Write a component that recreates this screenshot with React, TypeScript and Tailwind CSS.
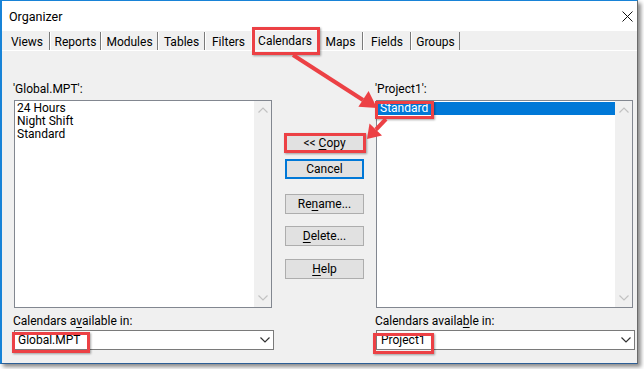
import React from "react";

function U({ children }: { children: React.ReactNode }) {
  return <span className="underline underline-offset-[2px] decoration-[1px]">{children}</span>;
}

function Chevron({ up, color }: { up?: boolean; color: string }) {
  return (
    <svg width="10" height="6" viewBox="0 0 10 6">
      <polyline
        points={up ? "0.5,5.5 5,1 9.5,5.5" : "0.5,0.5 5,5 9.5,0.5"}
        fill="none"
        stroke={color}
        strokeWidth="1.2"
      />
    </svg>
  );
}

function ScrollBar() {
  return (
    <div className="w-[17px] bg-[#f0f0f0] flex flex-col items-center justify-between pt-[6px] pb-[6px]">
      <Chevron up color="#c2c2c2" />
      <Chevron color="#c2c2c2" />
    </div>
  );
}

function Button({ children, def }: { children: React.ReactNode; def?: boolean }) {
  return (
    <div
      className={
        def
          ? "h-[20px] w-[79px] bg-[#e1e1e1] border border-[#0078d7] shadow-[inset_0_0_0_1px_#0078d7] flex items-center justify-center"
          : "h-[20px] w-[79px] bg-[#e1e1e1] border border-[#adadad] flex items-center justify-center"
      }
    >
      <span className="whitespace-pre">{children}</span>
    </div>
  );
}

const RED = "#ec4145";

export default function App() {
  return (
    <div className="relative w-[644px] h-[369px] bg-white overflow-hidden font-['Segoe_UI',Roboto,sans-serif] text-[12px] leading-[15px] text-black">
      <div className="w-[638px] h-[364px] flex flex-col border-t border-l-2 border-r border-b border-t-[#1883d7] border-l-[#1883d7] border-b-[#2d5f96] border-r-[#6a6a6a] shadow-[3px_3px_4px_rgba(0,0,0,0.45)] bg-[#f0f0f0]">
        {/* Title bar */}
        <div className="h-[30px] bg-white flex items-center justify-between pl-[7px] pr-[4px]">
          <span className="text-[12.5px]">Organizer</span>
          <svg width="11" height="11" viewBox="0 0 11 11">
            <path d="M0.5 0.5 L10.5 10.5 M10.5 0.5 L0.5 10.5" stroke="#111" strokeWidth="1" />
          </svg>
        </div>

        {/* Tab strip */}
        <div className="h-[20px] flex items-end pl-[3px] border-b border-white">
          <div className="w-[45px] h-[18px] pt-[2px] border-r border-r-[#7a7a7a] flex items-center justify-center">Views</div>
          <div className="w-[51px] h-[18px] pt-[2px] border-l border-l-white border-r border-r-[#7a7a7a] flex items-center justify-center">Reports</div>
          <div className="w-[57px] h-[18px] pt-[2px] border-l border-l-white border-r border-r-[#7a7a7a] flex items-center justify-center">Modules</div>
          <div className="w-[47px] h-[18px] pt-[2px] border-l border-l-white border-r border-r-[#7a7a7a] flex items-center justify-center">Tables</div>
          <div className="w-[46px] h-[18px] pt-[2px] border-l border-l-white flex items-center justify-center">Filters</div>
          <div className="w-[68px] h-[20px] pt-[1px] border-l border-t border-white border-r border-r-[#7a7a7a] flex items-center justify-center">Calendars</div>
          <div className="w-[44px] h-[18px] pt-[2px] border-r border-r-[#7a7a7a] flex items-center justify-center">Maps</div>
          <div className="w-[48px] h-[18px] pt-[2px] border-l border-l-white border-r border-r-[#7a7a7a] flex items-center justify-center">Fields</div>
          <div className="w-[49px] h-[18px] pt-[2px] border-l border-l-white border-r border-r-[#7a7a7a] flex items-center justify-center">Groups</div>
        </div>

        {/* Panel */}
        <div className="flex-1 flex pt-[31px] pl-[11px]">
          {/* Left column */}
          <div className="w-[262px] flex flex-col">
            <div className="h-[15px] mb-[3px]">'Global.MPT':</div>
            <div className="ml-[1px] w-[258px] h-[208px] border border-[#828790] bg-white flex">
              <div className="flex-1 pt-[1px] leading-[13px]">
                <div className="h-[13px] pl-[2px]">24 Hours</div>
                <div className="h-[13px] pl-[2px]">Night Shift</div>
                <div className="h-[13px] pl-[2px]">Standard</div>
              </div>
              <ScrollBar />
            </div>
            <div className="h-[15px] mt-[6px]">
              Calendars a<U>v</U>ailable in:
            </div>
            <div className="ml-[1px] mt-[1px] w-[260px] h-[20px] border border-[#7a7a7a] bg-white flex items-center justify-between pl-[3px] pr-[3px]">
              <span>Global.MPT</span>
              <Chevron color="#333" />
            </div>
          </div>

          {/* Middle buttons */}
          <div className="ml-[10px] w-[79px] flex flex-col">
            <div className="mt-[51px]">
              <Button>
                {"<< "}
                <U>C</U>opy
              </Button>
            </div>
            <div className="mt-[6px]">
              <Button def>Cancel</Button>
            </div>
            <div className="mt-[15px]">
              <Button>
                Re<U>n</U>ame...
              </Button>
            </div>
            <div className="mt-[12px]">
              <Button>
                <U>D</U>elete...
              </Button>
            </div>
            <div className="mt-[13px]">
              <Button>
                <U>H</U>elp
              </Button>
            </div>
          </div>

          {/* Right column */}
          <div className="ml-[11px] w-[261px] flex flex-col">
            <div className="h-[15px] mb-[3px]">'Project1':</div>
            <div className="ml-[1px] w-[257px] h-[208px] border border-[#828790] bg-white flex">
              <div className="flex-1 pt-[1px] leading-[13px]">
                <div className="h-[13px] pl-[3px] bg-[#0078d7] text-white">Standard</div>
              </div>
              <ScrollBar />
            </div>
            <div className="h-[15px] mt-[6px]">
              Calendars availa<U>b</U>le in:
            </div>
            <div className="ml-[1px] mt-[1px] w-[259px] h-[20px] border border-[#7a7a7a] bg-white flex items-center justify-between pl-[4px] pr-[3px]">
              <span>Project1</span>
              <Chevron color="#333" />
            </div>
          </div>
        </div>
      </div>

      {/* Annotation overlays */}
      <div className="absolute left-[252px] top-[27px] w-[68px] h-[28px] border-[3px] border-[#ec4145] shadow-[1px_1px_2px_rgba(0,0,0,0.35)]" />
      <div className="absolute left-[375px] top-[101px] w-[59px] h-[18px] border-[3px] border-[#ec4145] shadow-[1px_1px_2px_rgba(0,0,0,0.35)]" />
      <div className="absolute left-[284px] top-[133px] w-[82px] h-[20px] border-[3px] border-[#ec4145] shadow-[1px_1px_2px_rgba(0,0,0,0.35)]" />
      <div className="absolute left-[12px] top-[332px] w-[78px] h-[21px] border-[3px] border-[#ec4145] shadow-[1px_1px_2px_rgba(0,0,0,0.35)]" />
      <div className="absolute left-[373px] top-[333px] w-[61px] h-[21px] border-[3px] border-[#ec4145] shadow-[1px_1px_2px_rgba(0,0,0,0.35)]" />

      <svg className="absolute left-0 top-0 pointer-events-none" width="644" height="369" viewBox="0 0 644 369">
        <line x1="293" y1="55" x2="363" y2="100" stroke={RED} strokeWidth="4" />
        <polygon points="377,108 358.4,106.8 368.6,91" fill={RED} />
        <line x1="386" y1="119" x2="376" y2="129.5" stroke={RED} strokeWidth="4" />
        <polygon points="367,139 369.5,123.5 382,135.5" fill={RED} />
      </svg>
    </div>
  );
}
